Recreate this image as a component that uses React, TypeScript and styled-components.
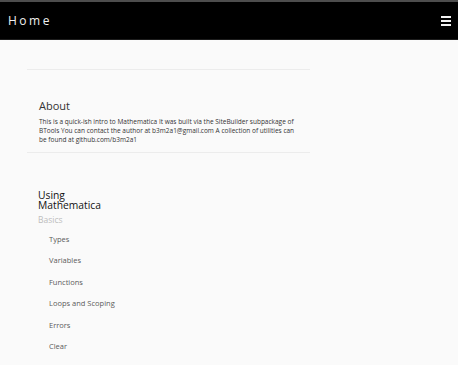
import styled, { createGlobalStyle } from "styled-components";

const GlobalStyle = createGlobalStyle`
  html, body {
    margin: 0;
    padding: 0;
    background: #fafafa;
    font-family: 'Open Sans', 'Liberation Sans', sans-serif;
    height: 365px;
    overflow: hidden;
  }
`;

const TopStrip = styled.div`
  height: 2px;
  background: #4d4d4d;
`;

const NavBar = styled.header`
  height: 38px;
  background: #000;
  border-bottom: 1px solid #1c1c1c;
  display: flex;
  align-items: center;
  justify-content: space-between;
  padding: 0 7px 0 8px;
  box-sizing: border-box;
`;

const Brand = styled.span`
  color: #f0f0f0;
  font-size: 12px;
  letter-spacing: 2.5px;
  font-family: 'Open Sans', sans-serif;
`;

const Burger = styled.button`
  background: none;
  border: none;
  padding: 0;
  display: flex;
  flex-direction: column;
  gap: 2px;
  cursor: pointer;

  span {
    display: block;
    width: 10px;
    height: 2px;
    background: #f2f2f2;
  }
`;

const Main = styled.main`
  width: 283px;
  margin-left: 27px;
  padding-top: 29px;
`;

const Divider = styled.hr`
  border: none;
  border-top: 1.5px solid #ececec;
  margin: 0;
`;

const About = styled.section`
  padding: 28px 0 8px 12px;
`;

const AboutTitle = styled.h2`
  margin: 0 0 4px;
  font-size: 11px;
  font-weight: 400;
  color: #333;
`;

const AboutText = styled.p`
  margin: 0;
  font-size: 6.5px;
  line-height: 9px;
  color: #333;
  padding-right: 10px;
`;

const Guide = styled.nav`
  padding: 37px 0 0 11px;
`;

const GuideTitle = styled.h3`
  margin: 0;
  font-size: 10.3px;
  line-height: 10px;
  font-weight: 500;
  color: #111;
  width: 80px;
`;

const Category = styled.div`
  font-size: 8.5px;
  color: #bdbdbd;
  margin-top: 4px;
`;

const Items = styled.ul`
  list-style: none;
  margin: 0;
  padding: 9px 0 3px 11px;
`;

const Item = styled.li`
  font-size: 7.5px;
  color: #5a5a5a;
  height: 21.4px;
`;

const topics = ["Types", "Variables", "Functions", "Loops and Scoping", "Errors", "Clear"];

export default function App() {
  return (
    <>
      <GlobalStyle />
      <TopStrip />
      <NavBar>
        <Brand>Home</Brand>
        <Burger aria-label="menu">
          <span />
          <span />
          <span />
        </Burger>
      </NavBar>
      <Main>
        <Divider />
        <About>
          <AboutTitle>About</AboutTitle>
          <AboutText>
            This is a quick-ish intro to Mathematica It was built via the SiteBuilder subpackage of
            BTools You can contact the author at b3m2a1@gmail.com A collection of utilities can
            be found at github.com/b3m2a1
          </AboutText>
        </About>
        <Divider />
        <Guide>
          <GuideTitle>Using Mathematica</GuideTitle>
          <Category>Basics</Category>
          <Items>
            {topics.map(t => (
              <Item key={t}>{t}</Item>
            ))}
          </Items>
          <Category>Basics</Category>
        </Guide>
      </Main>
    </>
  );
}
